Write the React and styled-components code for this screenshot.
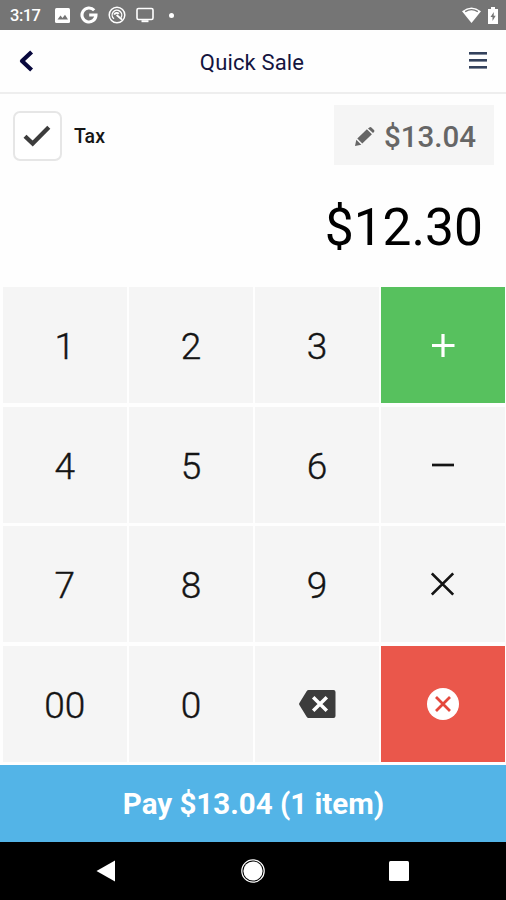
import styled, { createGlobalStyle } from 'styled-components'

const GlobalStyle = createGlobalStyle`
  * {
    box-sizing: border-box;
  }

  body {
    margin: 0;
    background: #fff;
    font-family: Roboto, 'Liberation Sans', sans-serif;
  }

  button {
    border: 0;
    padding: 0;
    margin: 0;
    background: none;
    font-family: inherit;
  }

  svg {
    display: block;
    flex: none;
  }
`

const Screen = styled.div`
  display: flex;
  flex-direction: column;
  width: 506px;
  height: 900px;
  overflow: hidden;
  background: #fefefe;
`

const StatusBar = styled.div`
  display: flex;
  align-items: center;
  height: 30px;
  padding: 0 8px 0 10px;
  background: #757575;
  color: #fff;
`

const Clock = styled.span`
  width: 45px;
  padding-top: 2px;
  font-size: 16.5px;
  font-weight: 500;
  line-height: 20px;
  letter-spacing: -0.5px;
`

const StatusIcons = styled.div`
  display: flex;
  align-items: center;
  gap: ${(props) => props.$gap}px;
  margin-left: ${(props) => (props.$end ? 'auto' : 0)};
`

const Dot = styled.span`
  width: 5px;
  height: 5px;
  margin-left: 5px;
  border-radius: 50%;
  background: #fff;
`

const Header = styled.header`
  display: grid;
  grid-template-columns: 60px 1fr 60px;
  align-items: center;
  height: 64px;
  border-bottom: 2px solid #eeeeee;
`

const HeaderButton = styled.button`
  display: flex;
  justify-content: ${(props) => props.$align};
  padding: 0 18px;
`

const Title = styled.h1`
  margin: 0;
  padding: 3px 2px 0 0;
  color: #14143f;
  font-size: 22px;
  font-weight: 400;
  line-height: 28px;
  letter-spacing: 0.15px;
  text-align: center;
`

const TaxRow = styled.div`
  display: flex;
  align-items: center;
  height: 83px;
  padding: 0 12px 0 13px;
`

const Checkbox = styled.button`
  display: flex;
  align-items: center;
  justify-content: center;
  width: 49px;
  height: 50px;
  padding-right: 2px;
  border: 2px solid #e6e6e6;
  border-radius: 7px;
  background: #fff;
`

const TaxLabel = styled.span`
  padding: 2px 0 0 12px;
  color: #161616;
  font-size: 19.5px;
  font-weight: 500;
`

const TotalButton = styled.button`
  display: flex;
  align-items: center;
  justify-content: flex-end;
  gap: 9px;
  width: 160px;
  height: 60px;
  margin: 0 0 1px auto;
  padding: 3px 18px 0 0;
  background: #f5f5f5;
  color: #666;
  font-size: 29.5px;
  font-weight: 500;
`

const Amount = styled.div`
  height: 110px;
  padding: 20px 23px 0 0;
  color: #000;
  font-size: 51.5px;
  line-height: 62px;
  text-align: right;
`

const Keypad = styled.div`
  display: grid;
  grid-template-columns: repeat(4, 1fr);
  grid-template-rows: repeat(4, 1fr);
  gap: 3.5px 2.5px;
  height: 478px;
  padding: 0 1px 3px 3px;
`

const keyColors = {
  plain: ['#f5f5f5', '#141414'],
  add: ['#57c15e', '#fff'],
  clear: ['#ea574b', '#fff'],
}

const Key = styled.button`
  display: flex;
  align-items: center;
  justify-content: center;
  background: ${(props) => keyColors[props.$tone || 'plain'][0]};
  color: ${(props) => keyColors[props.$tone || 'plain'][1]};
  font-size: 37px;
  font-weight: 300;
  line-height: 44px;
`

const Digit = styled.span`
  padding-top: 4px;
  -webkit-text-stroke: 0.4px currentColor;
`

const PayButton = styled.button`
  height: 77px;
  padding: 1px 0 0 1px;
  background: #53b4e7;
  color: #fff;
  font-size: 29.5px;
  font-weight: 700;
`

const NavBar = styled.nav`
  display: flex;
  align-items: center;
  justify-content: space-between;
  height: 58px;
  padding: 0 97px 0 96px;
  background: #000;
`

const PictureIcon = () => (
  <svg width='15' height='15' viewBox='0 0 15 15'>
    <rect width='15' height='15' rx='1.5' fill='#fff' />
    <path d='M2.5 11.5l3-4 2 2.4 2.5-3.2 3 4.8z' fill='#757575' />
  </svg>
)

const GoogleIcon = () => (
  <svg width='18' height='18' viewBox='0 0 18 18' fill='none'>
    <path
      d='M14.2 4.3A7 7 0 1 0 16 9H9.2'
      stroke='#fff'
      strokeWidth='3.1'
    />
  </svg>
)

const SyncIcon = () => (
  <svg width='18' height='18' viewBox='0 0 18 18' fill='none' stroke='#fff'>
    <circle cx='9' cy='9' r='7.8' strokeWidth='1.5' />
    <path d='M6 12.8A4.8 4.8 0 1 1 13 11.6' strokeWidth='1.4' />
    <path d='M6.2 8.6a2.8 2.8 0 0 1 4.6-.8M8.6 9l5.4 4.6' strokeWidth='1.9' />
  </svg>
)

const CastIcon = () => (
  <svg width='18' height='16' viewBox='0 0 18 16' fill='none'>
    <rect x='1' y='1.5' width='16' height='11' rx='1.5' stroke='#fff' strokeWidth='1.6' />
    <path d='M5.5 14.2h7' stroke='#fff' strokeWidth='2' />
  </svg>
)

const WifiIcon = () => (
  <svg width='19' height='16' viewBox='0 0 19 16'>
    <path d='M0 4.2Q9.5-3.2 19 4.2L9.5 16z' fill='#fff' />
    <path d='M3.2 4.6Q9.5.6 15.8 4.6' fill='none' stroke='#757575' strokeWidth='1.3' />
  </svg>
)

const BatteryIcon = () => (
  <svg width='10' height='17' viewBox='0 0 10 17'>
    <path d='M3 0h4v2h3v15H0V2h3z' fill='#fff' />
    <path d='M5.8 5L2.5 10h2v4l3.2-5.2h-2z' fill='#757575' />
  </svg>
)

const BackIcon = () => (
  <svg width='17' height='22' viewBox='0 0 17 22' fill='none'>
    <path d='M13.6 2L4 11l9.6 9' stroke='#08083d' strokeWidth='4.2' strokeLinejoin='round' />
  </svg>
)

const MenuIcon = () => (
  <svg width='19' height='18' viewBox='0 0 19 18' fill='#33415c'>
    <rect width='18' height='2.6' y='0' />
    <rect width='18' height='2.6' y='7' />
    <rect width='18' height='2.6' y='14' />
  </svg>
)

const CheckIcon = () => (
  <svg width='28' height='22' viewBox='0 0 28 22' fill='none'>
    <path d='M2 11.2L9.7 18.6 25.8 2.2' stroke='#3c3c3c' strokeWidth='4.3' />
  </svg>
)

const PencilIcon = () => (
  <svg width='20' height='20' viewBox='0 0 20 20' fill='#666'>
    <path d='M0 19l1.3-6.3 5 5zM2.3 11.5L11.9 2.2l5 5-9.6 9.3zM13 1.4l1.4-1q1-.6 2 .1l2.6 2.6q.8 1 0 1.9L18 6.1z' />
  </svg>
)

const PlusIcon = () => (
  <svg width='23' height='23' viewBox='0 0 23 23'>
    <path d='M11 0v23M0 11.5h22.5' stroke='#fff' strokeWidth='3.2' />
  </svg>
)

const MinusIcon = () => (
  <svg width='23' height='4' viewBox='0 0 23 4'>
    <path d='M0 2h22' stroke='#141414' strokeWidth='2.7' />
  </svg>
)

const TimesIcon = () => (
  <svg width='24' height='24' viewBox='0 0 24 24'>
    <path d='M.8 1.4l21.4 21.2M22.2 1.4L.8 22.6' stroke='#141414' strokeWidth='2.7' />
  </svg>
)

const BackspaceIcon = () => (
  <svg width='37' height='28' viewBox='0 0 37 28'>
    <path d='M9.6 0H34.5q2 0 2 2v24q0 2-2 2H9.6q-1.2 0-1.8-1L.4 15q-.6-1 0-2L7.8 1q.6-1 1.8-1z' fill='#3c3c3c' />
    <path d='M14.2 7.2l13.6 13.6M27.8 7.2L14.2 20.8' stroke='#fff' strokeWidth='3.5' />
  </svg>
)

const ClearIcon = () => (
  <svg width='33' height='32' viewBox='0 0 33 32'>
    <circle cx='16' cy='16' r='16' fill='#fff' />
    <path d='M9 9l14 14M23 9L9 23' stroke='#e4483c' strokeWidth='2.8' />
  </svg>
)

const NavBack = () => (
  <svg width='19' height='22' viewBox='0 0 19 22'>
    <path d='M19 .5v21L.5 11z' fill='#fff' />
  </svg>
)

const NavHome = () => (
  <svg width='24' height='24' viewBox='-1 0 24 24' overflow='visible'>
    <circle cx='12' cy='12' r='11.2' fill='none' stroke='#fff' strokeWidth='1.2' />
    <circle cx='12' cy='12' r='9.6' fill='#fff' />
  </svg>
)

const NavRecent = () => (
  <svg width='20' height='20' viewBox='0 0 20 20'>
    <rect width='20' height='20' rx='1.5' fill='#fff' />
  </svg>
)

const keys = [
  { id: '1' },
  { id: '2' },
  { id: '3' },
  { id: 'add', icon: <PlusIcon />, tone: 'add' },
  { id: '4' },
  { id: '5' },
  { id: '6' },
  { id: 'subtract', icon: <MinusIcon /> },
  { id: '7' },
  { id: '8' },
  { id: '9' },
  { id: 'multiply', icon: <TimesIcon /> },
  { id: '00' },
  { id: '0' },
  { id: 'backspace', icon: <BackspaceIcon /> },
  { id: 'clear', icon: <ClearIcon />, tone: 'clear' },
]

const App = () => (
  <Screen>
    <GlobalStyle />
    <StatusBar>
      <Clock>3:17</Clock>
      <StatusIcons $gap={10}>
        <PictureIcon />
        <GoogleIcon />
        <SyncIcon />
        <CastIcon />
        <Dot />
      </StatusIcons>
      <StatusIcons $gap={7} $end>
        <WifiIcon />
        <BatteryIcon />
      </StatusIcons>
    </StatusBar>
    <Header>
      <HeaderButton $align='flex-start'>
        <BackIcon />
      </HeaderButton>
      <Title>Quick Sale</Title>
      <HeaderButton $align='flex-end'>
        <MenuIcon />
      </HeaderButton>
    </Header>
    <TaxRow>
      <Checkbox>
        <CheckIcon />
      </Checkbox>
      <TaxLabel>Tax</TaxLabel>
      <TotalButton>
        <PencilIcon />
        $13.04
      </TotalButton>
    </TaxRow>
    <Amount>$12.30</Amount>
    <Keypad>
      {keys.map(({ id, icon, tone }) => (
        <Key key={id} $tone={tone}>
          {icon || <Digit>{id}</Digit>}
        </Key>
      ))}
    </Keypad>
    <PayButton>Pay $13.04 (1 item)</PayButton>
    <NavBar>
      <NavBack />
      <NavHome />
      <NavRecent />
    </NavBar>
  </Screen>
)

export default App
